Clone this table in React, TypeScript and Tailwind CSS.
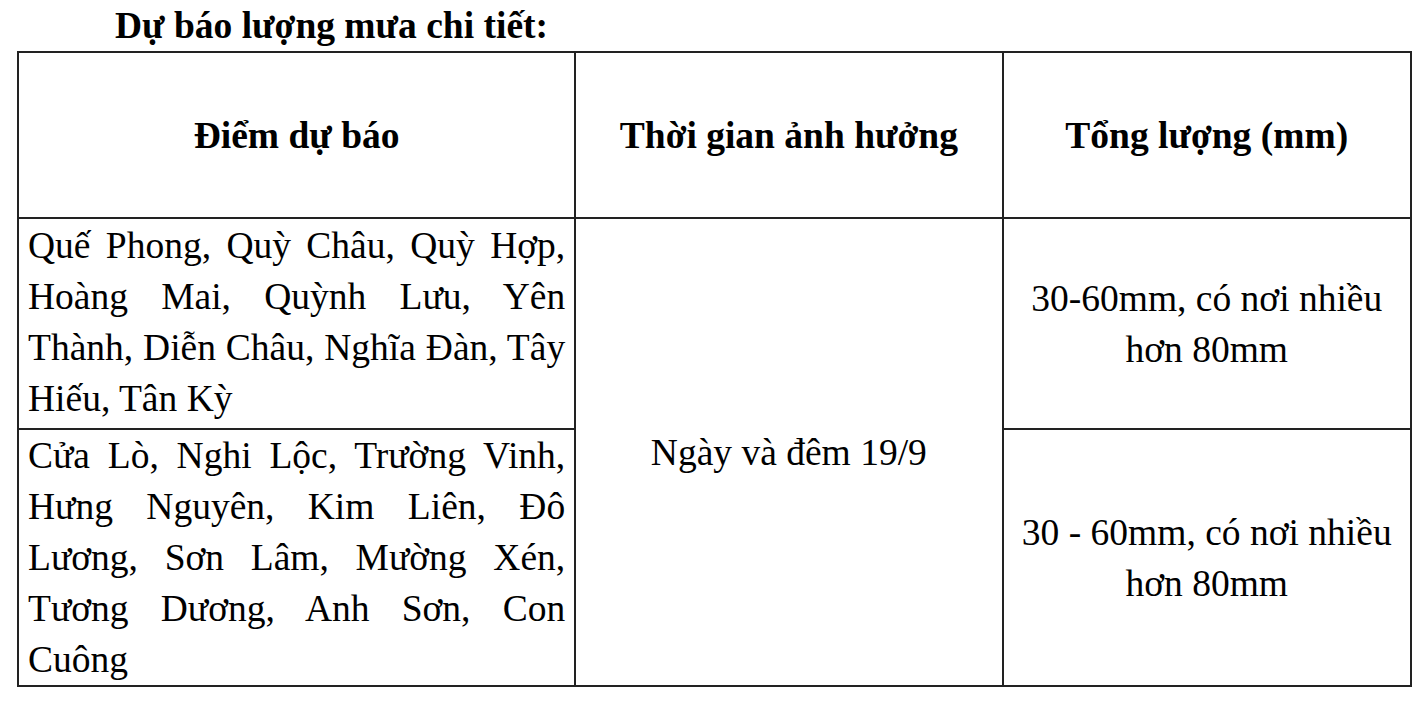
import React from "react";

export default function App() {
  const serif = { fontFamily: '"Liberation Serif", "Times New Roman", serif' };
  return (
    <div className="w-[1428px] h-[702px] bg-white text-black" style={serif}>
      <div className="pl-[115px] pt-[6px] h-[51px] text-[37.5px] leading-[40px] font-bold">
        Dự báo lượng mưa chi tiết:
      </div>
      <table className="ml-[17px] w-[1395px] border-collapse border-2 border-[#222] text-[37.5px] leading-[51px]">
        <colgroup>
          <col className="w-[558px]" />
          <col className="w-[428px]" />
          <col className="w-[409px]" />
        </colgroup>
        <tbody>
          <tr className="h-[166px]">
            <th className="border-2 border-[#222] text-center align-middle font-bold">Điểm dự báo</th>
            <th className="border-2 border-[#222] text-center align-middle font-bold">Thời gian ảnh hưởng</th>
            <th className="border-2 border-[#222] text-center align-middle font-bold">Tổng lượng (mm)</th>
          </tr>
          <tr className="h-[211px]">
            <td className="border-2 border-[#222] px-[9px] pt-[1px] align-top text-justify">
              Quế Phong, Quỳ Châu, Quỳ Hợp, Hoàng Mai, Quỳnh Lưu, Yên Thành, Diễn Châu, Nghĩa Đàn, Tây Hiếu, Tân Kỳ
            </td>
            <td rowSpan={2} className="border-2 border-[#222] text-center align-middle">
              Ngày và đêm 19/9
            </td>
            <td className="border-2 border-[#222] text-center align-middle px-[20px]">
              30-60mm, có nơi nhiều hơn 80mm
            </td>
          </tr>
          <tr className="h-[256px]">
            <td className="border-2 border-[#222] px-[9px] align-top text-justify">
              Cửa Lò, Nghi Lộc, Trường Vinh, Hưng Nguyên, Kim Liên, Đô Lương, Sơn Lâm, Mường Xén, Tương Dương, Anh Sơn, Con Cuông
            </td>
            <td className="border-2 border-[#222] text-center align-middle px-[8px]">
              30 - 60mm, có nơi nhiều hơn 80mm
            </td>
          </tr>
        </tbody>
      </table>
    </div>
  );
}
